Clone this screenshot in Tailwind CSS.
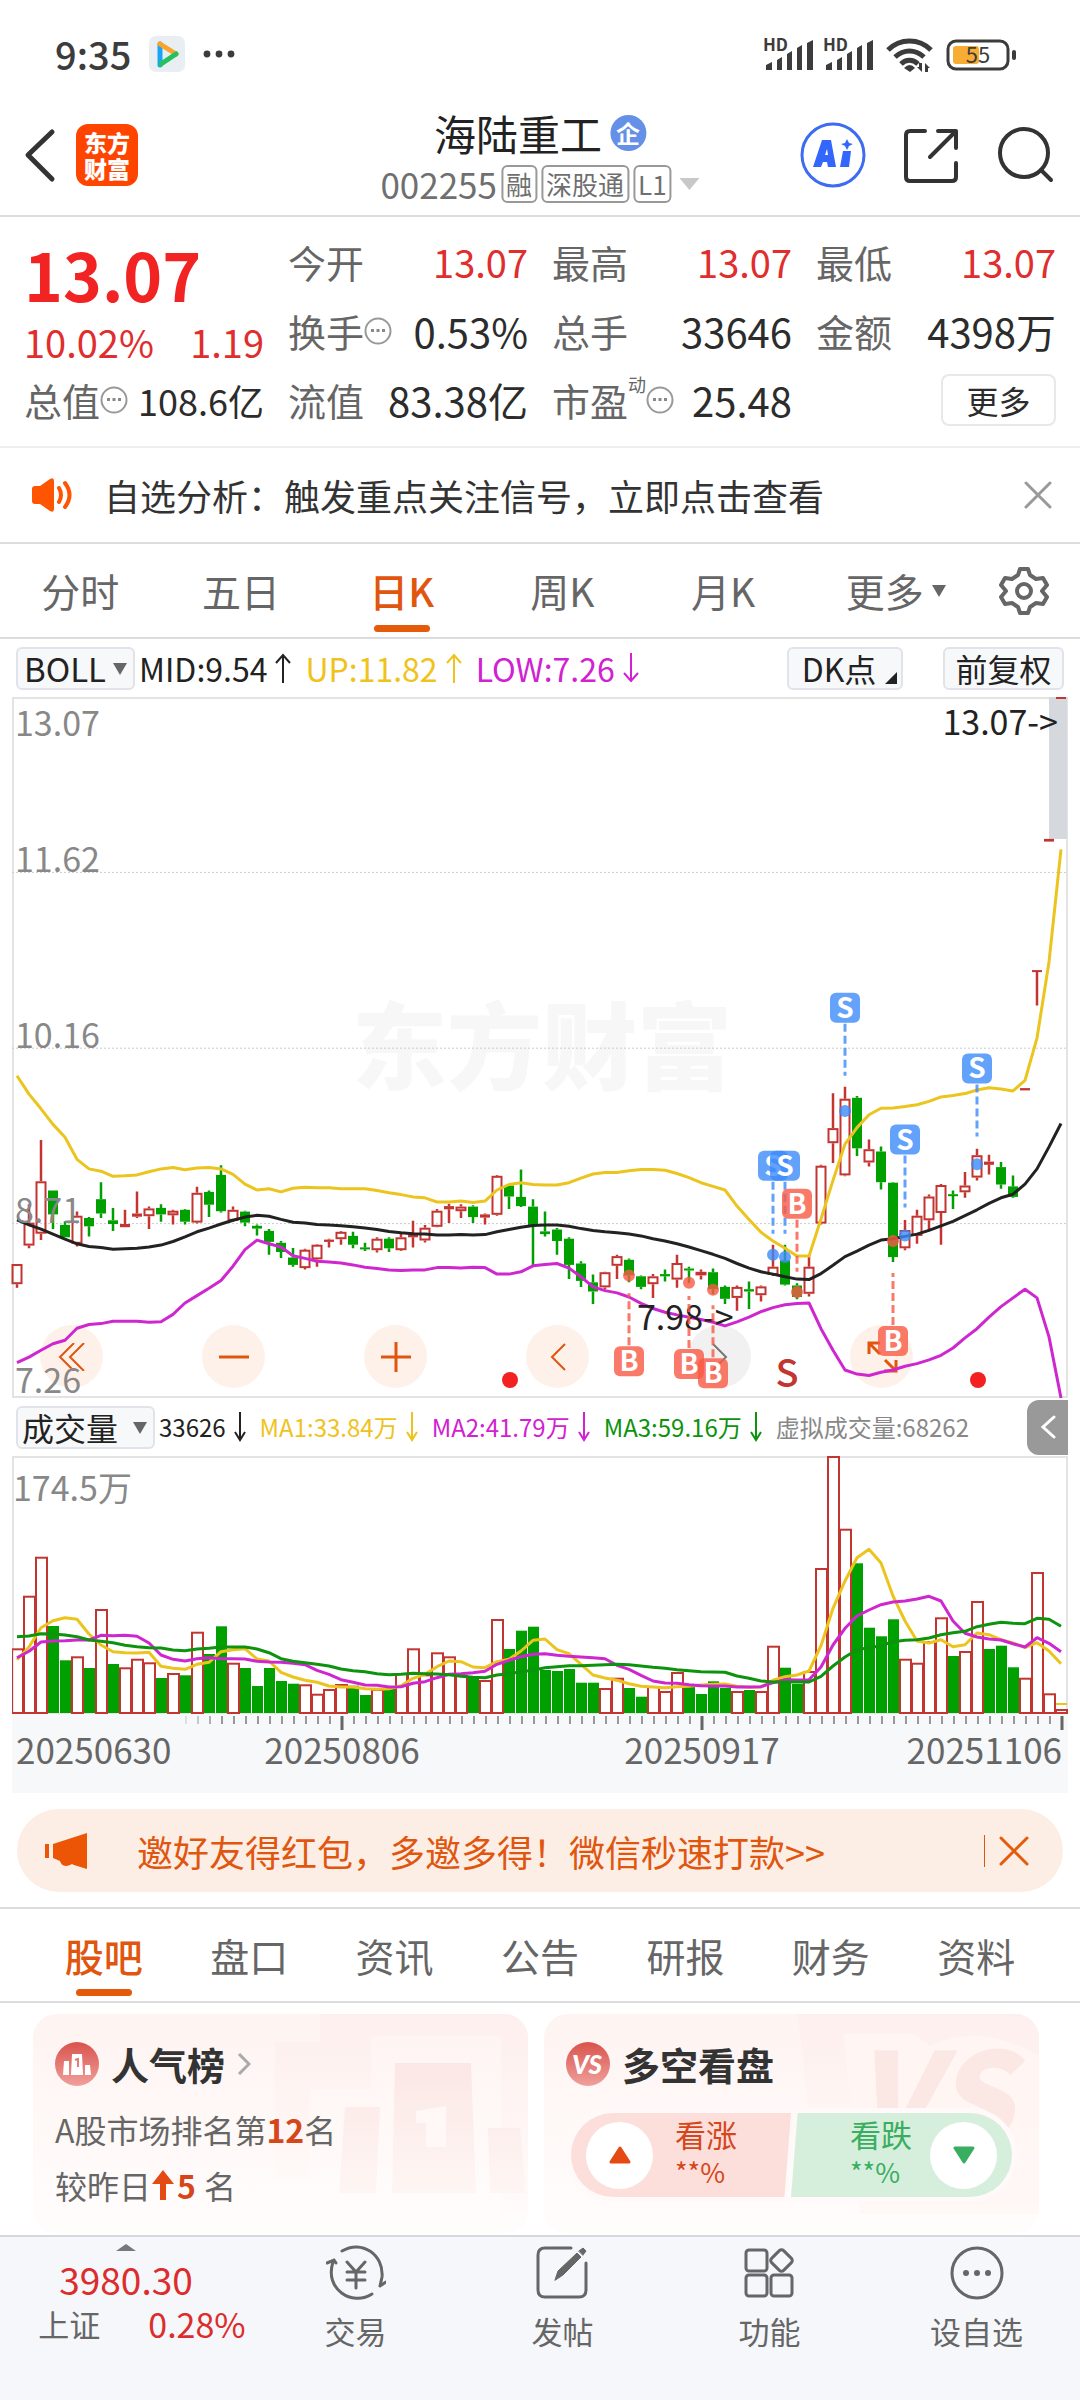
<!DOCTYPE html>
<html lang="zh-CN">
<head>
  <meta charset="UTF-8" />
  <meta name="viewport" content="width=device-width, initial-scale=1.0" />
  <title>海陆重工 002255 | 东方财富</title>
  <script src="https://cdn.jsdelivr.net/npm/@tailwindcss/browser@4"></script>

  <style>
    body {
      font-family: 'Noto Sans CJK SC', 'Noto Sans', sans-serif;
    }
  </style>
</head>
<body class="min-h-screen flex flex-col bg-white text-[#333] leading-none">

  <!-- Barra de estado -->
  <div class="h-[108px] pl-[55px] pr-[61px] flex items-center justify-between text-[#3c3c3c]">
    <div class="flex items-center gap-[18px]">
      <span class="text-[38px] font-medium">9:35</span>
      <svg class="w-9 h-9" viewBox="0 0 36 36">
        <rect width="36" height="36" rx="7" fill="#e9eef3" />
        <path d="M11 8v21" stroke="#18a5f5" stroke-width="5" stroke-linecap="round" />
        <path d="M11 8l16 10" stroke="#f7a52b" stroke-width="5" stroke-linecap="round" />
        <path d="M27 18L12 28" stroke="#25c15c" stroke-width="5" stroke-linecap="round" />
      </svg>
      <svg class="w-8 h-2" viewBox="0 0 32 8" fill="currentColor">
        <circle cx="4" cy="4" r="3.4" /><circle cx="16" cy="4" r="3.4" /><circle cx="28" cy="4" r="3.4" />
      </svg>
    </div>
    <svg class="w-[256px] h-9 overflow-visible" viewBox="0 0 256 36" fill="currentColor">
      <g id="signal">
        <text x="0" y="15" font-size="17" font-weight="700">HD</text>
        <path d="M3 34v-5l6-3v8zM14 34V24l5-3v13zM24 34V18l5-3v19zM34 34V12l5-3v25zM44 34V7l6-3v30z" />
      </g>
      <use href="#signal" x="60" />
      <g fill="none" stroke="currentColor" stroke-width="5">
        <path d="M125 14c12-12 31-12 43 0" /><path d="M132 21c9-8 20-8 29 0" /><path d="M138 28c5-5 12-5 17 0" />
      </g>
      <path d="M141 32q6-6 11 0l-5 4zM156 27h3v9l-5-5h2zM165 36h-3v-9l5 5h-2z" />
      <rect x="185" y="5" width="60" height="28" rx="8" fill="none" stroke="currentColor" stroke-width="3" />
      <rect x="190" y="10" width="26" height="18" rx="3" fill="#f7ad33" />
      <rect x="249" y="14" width="4" height="10" rx="2" />
      <text x="215" y="27" font-size="22" text-anchor="middle">55</text>
    </svg>
  </div>

  <!-- Cabecera -->
  <header class="relative h-[109px] border-b-2 border-[#dcdcdc] px-6 pb-[13px] flex justify-between">
    <div class="flex items-center gap-5">
      <button aria-label="返回">
        <svg class="w-8 h-14" viewBox="0 0 32 56" fill="none" stroke="#333" stroke-width="5" stroke-linecap="round" stroke-linejoin="round"><path d="M28 5L4 28l24 24" /></svg>
      </button>
      <a href="#" class="w-[62px] h-[62px] rounded-xl bg-[#ff4400] text-white text-[23px] leading-[26px] font-black text-center pt-[5px]">东方<br>财富</a>
    </div>
    <div class="absolute left-1/2 -translate-x-1/2 top-0 flex flex-col items-center">
      <h1 class="flex items-center gap-2 text-[42px] leading-[50px] text-[#222]">海陆重工
        <span class="w-9 h-9 rounded-full bg-[#6590e8] text-white text-[24px] leading-9 font-bold text-center">企</span>
      </h1>
      <div class="flex items-center gap-1 mt-[6px] text-[26px] text-[#6f6f6f]">
        <span class="text-[35px] leading-10">002255</span>
        <span class="border-2 border-[#999] rounded-md px-[3px] leading-[34px]">融</span>
        <span class="border-2 border-[#999] rounded-md px-[3px] leading-[34px]">深股通</span>
        <span class="border-2 border-[#999] rounded-md px-[3px] leading-[34px]">L1</span>
        <svg class="w-5 h-3 ml-1" viewBox="0 0 20 12"><path d="M0 0h20L10 12z" fill="#c8c8c8" /></svg>
      </div>
    </div>
    <div class="flex items-center gap-9 pr-[2px]">
      <button aria-label="Ai">
        <svg class="w-[66px] h-[66px]" viewBox="0 0 66 66">
          <circle cx="33" cy="33" r="31" fill="none" stroke="#3d6cf0" stroke-width="3" />
          <path d="M13 45l9-27h9l5 27h-8l-1-5h-4l-2 5zM25 33h3l-1-6zM43 29h8l-2 16h-9zM47 17l2 4 4 1-4 2-2 4-2-4-4-2 4-1z" fill="#3366fb" fill-rule="evenodd" />
        </svg>
      </button>
      <button aria-label="分享">
        <svg class="w-[58px] h-[58px]" viewBox="0 0 58 58" fill="none" stroke="#333" stroke-width="4" stroke-linecap="round" stroke-linejoin="round">
          <path d="M23 5H8q-4 0-4 4v42q0 4 4 4h42q4 0 4-4V37M36 5h18v17M54 5L28 31" />
        </svg>
      </button>
      <button aria-label="搜索">
        <svg class="w-[58px] h-[58px]" viewBox="0 0 58 58" fill="none" stroke="#333" stroke-width="4" stroke-linecap="round">
          <circle cx="28" cy="27" r="24" /><path d="M45 44l10 10" />
        </svg>
      </button>
    </div>
  </header>

  <!-- Cotización -->
  <section class="px-6 pt-[10px] pb-3 grid grid-cols-4 gap-6 border-b-2 border-[#eee] text-[38px] text-[#666] whitespace-nowrap">
    <div>
      <div class="h-[92px] flex items-center text-[66px] font-bold text-[#f22323]">13.07</div>
      <div class="h-[46px] flex items-center justify-between text-[#e02d2d]"><span>10.02%</span><span>1.19</span></div>
      <div class="h-[69px] flex items-center justify-between">
        <span class="flex items-center">总值
          <svg class="w-7 h-7" viewBox="0 0 28 28"><circle cx="14" cy="14" r="12.500" fill="none" stroke="#999" stroke-width="2" /><path d="M7 12h3v3H7zM12.500 12h3v3h-3zM18 12h3v3h-3z" fill="#888" /></svg>
        </span>
        <span class="text-[36px] text-[#2c2c2c]">108.6亿</span>
      </div>
    </div>
    <div>
      <div class="h-[69px] flex items-center justify-between">今开<span class="text-[#e02d2d]">13.07</span></div>
      <div class="h-[69px] flex items-center justify-between">
        <span class="flex items-center">换手
          <svg class="w-7 h-7" viewBox="0 0 28 28"><circle cx="14" cy="14" r="12.500" fill="none" stroke="#999" stroke-width="2" /><path d="M7 12h3v3H7zM12.500 12h3v3h-3zM18 12h3v3h-3z" fill="#888" /></svg>
        </span>
        <span class="text-[40px] text-[#2c2c2c]">0.53%</span>
      </div>
      <div class="h-[69px] flex items-center justify-between">流值<span class="text-[40px] text-[#2c2c2c]">83.38亿</span></div>
    </div>
    <div>
      <div class="h-[69px] flex items-center justify-between">最高<span class="text-[#e02d2d]">13.07</span></div>
      <div class="h-[69px] flex items-center justify-between">总手<span class="text-[40px] text-[#2c2c2c]">33646</span></div>
      <div class="h-[69px] flex items-center justify-between">
        <span class="flex items-center">市盈<sup class="text-[18px] -top-4">动</sup>
          <svg class="w-7 h-7" viewBox="0 0 28 28"><circle cx="14" cy="14" r="12.500" fill="none" stroke="#999" stroke-width="2" /><path d="M7 12h3v3H7zM12.500 12h3v3h-3zM18 12h3v3h-3z" fill="#888" /></svg>
        </span>
        <span class="text-[40px] text-[#2c2c2c]">25.48</span>
      </div>
    </div>
    <div>
      <div class="h-[69px] flex items-center justify-between">最低<span class="text-[#e02d2d]">13.07</span></div>
      <div class="h-[69px] flex items-center justify-between">金额<span class="text-[40px] text-[#2c2c2c]">4398万</span></div>
      <div class="h-[69px] flex items-center justify-end">
        <button class="w-[115px] h-[52px] border-2 border-[#e8e8e8] rounded-lg text-[32px] text-[#2c2c2c]">更多</button>
      </div>
    </div>
  </section>

  <!-- Aviso -->
  <div class="h-[96px] pl-[30px] pr-7 flex items-center border-b-2 border-[#dcdcdc]">
    <svg class="w-11 h-9 mr-[30px]" viewBox="0 0 44 36">
      <path d="M2 12q0-3 3-3h5L20 2q4-2 4 2v28q0 4-4 2l-10-7H5q-3 0-3-3z" fill="#ff5500" />
      <path d="M29 11q4 7 0 14M35 6q9 12 0 24" fill="none" stroke="#ff5500" stroke-width="4" stroke-linecap="round" />
    </svg>
    <a href="#" class="flex-1 text-[36px]">自选分析：触发重点关注信号，立即点击查看</a>
    <button aria-label="关闭">
      <svg class="w-7 h-7" viewBox="0 0 28 28" stroke="#999" stroke-width="3" stroke-linecap="round"><path d="M2 2l24 24M26 2L2 26" /></svg>
    </button>
  </div>

  <!-- Periodos -->
  <nav class="h-[95px] flex border-b-2 border-[#dcdcdc] text-[39px] text-[#666]">
    <button class="flex-1">分时</button>
    <button class="flex-1">五日</button>
    <button class="flex-1 relative font-medium text-[#e0560f]">日K
      <span class="absolute bottom-[5px] left-1/2 -translate-x-1/2 w-14 h-[7px] rounded-full bg-[#e65a0b]"></span>
    </button>
    <button class="flex-1">周K</button>
    <button class="flex-1">月K</button>
    <button class="flex-1 flex items-center justify-center gap-2 pl-3">更多
      <svg class="w-[14px] h-3" viewBox="0 0 14 12"><path d="M0 0h14L7 12z" fill="#666" /></svg>
    </button>
    <button class="w-[104px] pr-2 flex items-center justify-center" aria-label="设置">
      <svg class="w-[50px] h-[50px]" viewBox="0 0 50 50" fill="none" stroke="#666" stroke-width="4" stroke-linejoin="round">
        <path d="M21 3h8l2 6 6 4 7-1 4 7-5 6 5 6-4 7-7-1-6 4-2 6h-8l-2-6-6-4-7 1-4-7 5-6-5-6 4-7 7 1 6-4z" />
        <circle cx="25" cy="25" r="7" />
      </svg>
    </button>
  </nav>

  <!-- Indicador BOLL -->
  <div class="h-[58px] px-4 flex items-center text-[32px] text-[#222] whitespace-nowrap">
    <div class="relative">
      <select aria-label="主图指标" class="appearance-none w-[119px] h-[43px] pl-[6px] border-2 border-[#e0e3e9] rounded-md bg-[#f7f8fa] text-[33px] leading-[38px]">
        <option>BOLL</option>
        <option>MA</option>
      </select>
      <svg class="absolute right-2 top-4 w-[14px] h-3 pointer-events-none" viewBox="0 0 14 12"><path d="M0 0h14L7 12z" fill="#666" /></svg>
    </div>
    <div class="flex items-center gap-[14px] ml-1">
      <span class="flex items-center gap-2">MID:9.54
        <svg class="w-4 h-[30px]" viewBox="0 0 16 30" fill="none" stroke="currentColor" stroke-width="2"><path d="M8 30V2M1 10l7-8 7 8" /></svg>
      </span>
      <span class="flex items-center gap-2 text-[#efc31c]">UP:11.82
        <svg class="w-4 h-[30px]" viewBox="0 0 16 30" fill="none" stroke="currentColor" stroke-width="2"><path d="M8 30V2M1 10l7-8 7 8" /></svg>
      </span>
      <span class="flex items-center gap-2 text-[#d022d0]">LOW:7.26
        <svg class="w-4 h-[30px]" viewBox="0 0 16 30" fill="none" stroke="currentColor" stroke-width="2"><path d="M8 0v28M1 20l7 8 7-8" /></svg>
      </span>
    </div>
    <button class="relative ml-auto mr-10 w-[116px] h-[43px] pr-3 border-2 border-[#e0e3e9] rounded-md bg-[#f7f8fa]">DK点
      <svg class="absolute right-1 bottom-1 w-3 h-3" viewBox="0 0 12 12"><path d="M12 0v12H0z" fill="#222" /></svg>
    </button>
    <button class="w-[121px] h-[43px] border-2 border-[#e0e3e9] rounded-md bg-[#f7f8fa]">前复权</button>
  </div>

  <!-- Gráfico de velas -->
  <div class="relative mx-3">
    <div class="absolute left-7 bottom-[10px] flex gap-[99px] text-[#e0560f]">
      <button aria-label="最早" class="w-[63px] h-[63px] rounded-full bg-[#fef1ea] flex items-center justify-center">
        <svg class="w-7 h-7" viewBox="0 0 28 28" fill="none" stroke="currentColor" stroke-width="2"><path d="M16 0L2 14l14 14M26 0L12 14l14 14" /></svg>
      </button>
      <button aria-label="缩小" class="w-[63px] h-[63px] rounded-full bg-[#fef1ea] flex items-center justify-center">
        <svg class="w-[30px] h-[30px]" viewBox="0 0 30 30" stroke="currentColor" stroke-width="3"><path d="M0 15h30" /></svg>
      </button>
      <button aria-label="放大" class="w-[63px] h-[63px] rounded-full bg-[#fef1ea] flex items-center justify-center">
        <svg class="w-[30px] h-[30px]" viewBox="0 0 30 30" stroke="currentColor" stroke-width="3"><path d="M0 15h30M15 0v30" /></svg>
      </button>
      <button aria-label="左移" class="w-[63px] h-[63px] rounded-full bg-[#fef1ea] flex items-center justify-center">
        <svg class="w-4 h-7" viewBox="0 0 16 28" fill="none" stroke="currentColor" stroke-width="2"><path d="M15 1L2 14l13 13" /></svg>
      </button>
      <button aria-label="右移" class="w-[63px] h-[63px] rounded-full bg-[#f1f1f1] text-[#777] flex items-center justify-center">
        <svg class="w-4 h-7" viewBox="0 0 16 28" fill="none" stroke="currentColor" stroke-width="2"><path d="M1 1l13 13L1 27" /></svg>
      </button>
      <button aria-label="全屏" class="w-[63px] h-[63px] rounded-full bg-[#fef1ea] flex items-center justify-center">
        <svg class="w-8 h-8" viewBox="0 0 32 32" fill="none" stroke="currentColor" stroke-width="3"><path d="M3 13V2h11M3 2l11 11M18 30h12V19M30 30L19 19" /></svg>
      </button>
    </div>
    <svg id="kline" class="relative block w-full h-auto overflow-visible pointer-events-none" viewBox="0 0 1056 701"></svg>
  </div>

  <!-- Indicador de volumen -->
  <div class="h-[58px] pl-4 mr-3 flex items-center whitespace-nowrap text-[#222]">
    <div class="relative">
      <select aria-label="副图指标" class="appearance-none w-[139px] h-[43px] pl-1 border-2 border-[#e0e3e9] rounded-md bg-[#f7f8fa] text-[32px] leading-[38px]">
        <option>成交量</option>
        <option>MACD</option>
      </select>
      <svg class="absolute right-2 top-4 w-[14px] h-3 pointer-events-none" viewBox="0 0 14 12"><path d="M0 0h14L7 12z" fill="#666" /></svg>
    </div>
    <div class="flex items-center gap-[14px] ml-1 text-[24px]">
      <span class="flex items-center gap-2">33626
        <svg class="w-3 h-[30px]" viewBox="0 0 12 30" fill="none" stroke="currentColor" stroke-width="2"><path d="M6 0v28M1 20l5 8 5-8" /></svg>
      </span>
      <span class="flex items-center gap-2 text-[#efc31c]">MA1:33.84万
        <svg class="w-3 h-[30px]" viewBox="0 0 12 30" fill="none" stroke="currentColor" stroke-width="2"><path d="M6 0v28M1 20l5 8 5-8" /></svg>
      </span>
      <span class="flex items-center gap-2 text-[#d022d0]">MA2:41.79万
        <svg class="w-3 h-[30px]" viewBox="0 0 12 30" fill="none" stroke="currentColor" stroke-width="2"><path d="M6 0v28M1 20l5 8 5-8" /></svg>
      </span>
      <span class="flex items-center gap-2 text-[#0d930d]">MA3:59.16万
        <svg class="w-3 h-[30px]" viewBox="0 0 12 30" fill="none" stroke="currentColor" stroke-width="2"><path d="M6 0v28M1 20l5 8 5-8" /></svg>
      </span>
      <span class="text-[#888]">虚拟成交量:68262</span>
    </div>
    <button aria-label="展开" class="ml-auto w-[41px] h-[55px] rounded-l-xl bg-[#999] flex items-center justify-center">
      <svg class="w-4 h-6" viewBox="0 0 16 24" fill="none" stroke="#fff" stroke-width="3" stroke-linecap="round"><path d="M14 2L3 12l11 10" /></svg>
    </button>
  </div>

  <!-- Volumen y eje de fechas -->
  <div class="mx-3">
    <svg id="volume" class="block w-full h-auto" viewBox="0 0 1056 258"></svg>
    <svg id="axis" class="block w-full h-auto bg-[#f7f8fa]" viewBox="0 0 1056 79"></svg>
  </div>

  <!-- Promoción -->
  <div class="mx-[17px] mt-4 mb-[15px] h-[83px] rounded-full bg-[#fceee5] pl-7 pr-[34px] flex items-center text-[#e0560f]">
    <svg class="w-[42px] h-9 mr-[50px]" viewBox="0 0 42 36" fill="#eb5505"><path d="M0 11h4v14H0zM8 11L42 0v36l-13-4-2-1-2 1q-8 3-10-4l-7-3z" /></svg>
    <a href="#" class="flex-1 text-[36px]">邀好友得红包，多邀多得！微信秒速打款&gt;&gt;</a>
    <span class="w-px h-8 bg-[#e0560f] mr-[14px]"></span>
    <button aria-label="关闭">
      <svg class="w-[30px] h-[30px]" viewBox="0 0 30 30" stroke="#e65a0b" stroke-width="3" stroke-linecap="round"><path d="M2 2l26 26M28 2L2 28" /></svg>
    </button>
  </div>

  <!-- Pestañas -->
  <nav class="h-[96px] px-[31px] flex border-y-2 border-[#dcdcdc] text-[39px] text-[#666]">
    <button class="flex-1 relative font-medium text-[#e0560f]">股吧
      <span class="absolute bottom-[5px] left-1/2 -translate-x-1/2 w-14 h-[7px] rounded-full bg-[#e65a0b]"></span>
    </button>
    <button class="flex-1">盘口</button>
    <button class="flex-1">资讯</button>
    <button class="flex-1">公告</button>
    <button class="flex-1">研报</button>
    <button class="flex-1">财务</button>
    <button class="flex-1">资料</button>
  </nav>

  <!-- Tarjetas -->
  <section class="pl-[33px] pr-[41px] pt-[11px] pb-[1px] grid grid-cols-2 gap-4">
    <div class="relative h-[220px] rounded-3xl overflow-hidden bg-linear-to-b from-[#fef4f2] to-[#fffdfc] px-[22px] pt-7">
      <svg class="absolute right-0 top-0 w-[255px] h-[220px]" viewBox="0 0 255 220">
        <defs>
          <linearGradient id="fade" x1="0" y1="0" x2="0" y2="1"><stop offset="0" stop-color="#fbe7e5" /><stop offset="1" stop-color="#fef6f4" /></linearGradient>
          <linearGradient id="halo" x1="0" y1="0" x2="0" y2="1"><stop offset="0" stop-color="#fdefed" /><stop offset="1" stop-color="#fffbfa" /></linearGradient>
        </defs>
        <path d="M47 0H255v200H228V22H98v53H37v90H2V28h45z" fill="url(#halo)" />
        <path d="M72 93h35l-4 86H66zM122 49h76l5 130h-84zM215 114h32l6 65h-36z" fill="url(#fade)" />
        <path d="M143 97l30-5v41h-20v-24h-10z" fill="#fff8f6" />
      </svg>
      <div class="relative">
        <a href="#" class="flex items-center text-[38px] leading-[44px] font-bold">
          <svg class="w-11 h-11 mr-3" viewBox="0 0 44 44">
            <defs><linearGradient id="red" x1="0" y1="0" x2="0" y2="1"><stop offset="0" stop-color="#d9534d" /><stop offset="1" stop-color="#f0a09c" /></linearGradient></defs>
            <circle cx="22" cy="22" r="22" fill="url(#red)" />
            <path d="M9 19h5v14H8zM17 12h10l1 21H16zM30 23h5l1 10h-6z" fill="#fff" />
            <path d="M20 18l3-1v8" fill="none" stroke="#e27c77" stroke-width="2" />
          </svg>人气榜
          <svg class="w-[14px] h-[22px] ml-3" viewBox="0 0 14 22" fill="none" stroke="#aaa" stroke-width="3"><path d="M2 1l10 10L2 21" /></svg>
        </a>
        <p class="mt-5 text-[32px] leading-[46px] text-[#666]">A股市场排名第<b class="text-[#d5471a]">12</b>名</p>
        <p class="mt-[10px] text-[32px] leading-[46px] text-[#666] flex items-center">较昨日
          <svg class="w-[22px] h-[30px] ml-px mr-[3px]" viewBox="0 0 22 30" fill="#e64a14"><path d="M11 0l11 14h-8v16H8V14H0z" /></svg><b class="text-[#d5471a] mr-2">5</b>名</p>
      </div>
    </div>

    <div class="relative h-[220px] rounded-3xl overflow-hidden bg-linear-to-b from-[#fef4f2] to-[#fffdfc] px-[22px] pt-7">
      <svg class="absolute right-0 top-0 w-[241px] h-[220px]" viewBox="0 0 241 220">
        <path d="M0 0h241v190H20z" fill="url(#halo)" />
        <path d="M46 20h70l16 12q50-24 109 10v158H62z" fill="#fff6f4" opacity=".8" />
        <text x="54" y="130" font-size="126" font-weight="900" font-style="italic" fill="#fbe8e5">VS</text>
      </svg>
      <div class="relative">
        <h2 class="flex items-center text-[38px] leading-[44px] font-bold">
          <svg class="w-11 h-11 mr-3" viewBox="0 0 44 44">
            <circle cx="22" cy="22" r="22" fill="url(#red)" />
            <text x="21" y="32" font-size="26" font-weight="900" font-style="italic" text-anchor="middle" fill="#fff" font-family="Lato">VS</text>
          </svg>多空看盘
        </h2>
        <div class="mt-[22px] w-[451px] rounded-full border-[5px] border-[#fffaf9] flex">
          <button class="w-[220px] h-[84px] rounded-l-full bg-[#fcdedb] [clip-path:polygon(0_0,100%_0,97%_100%,0_100%)] flex items-center pl-[15px] text-[#d5471a] text-left">
            <span class="w-[67px] h-[67px] rounded-full bg-white flex items-center justify-center mr-[22px]">
              <svg class="w-[22px] h-[18px]" viewBox="0 0 22 18"><path d="M11 2L2 16h18z" fill="#e64a14" stroke="#e64a14" stroke-width="3" stroke-linejoin="round" /></svg>
            </span>
            <span class="text-[31px] leading-10 pb-[6px]">看涨<br><span class="block text-[27px] leading-9">**%</span></span>
          </button>
          <button class="flex-1 h-[84px] rounded-r-full bg-[#d6efdd] [clip-path:polygon(3%_0,100%_0,100%_100%,0_100%)] flex items-center justify-end pr-[15px] text-[#3aae60] text-left">
            <span class="text-[31px] leading-10 pb-[6px]">看跌<br><span class="block text-[27px] leading-9">**%</span></span>
            <span class="w-[67px] h-[67px] rounded-full bg-white flex items-center justify-center ml-[18px]">
              <svg class="w-[22px] h-[18px]" viewBox="0 0 22 18"><path d="M11 16L2 2h18z" fill="#3aae60" stroke="#3aae60" stroke-width="3" stroke-linejoin="round" /></svg>
            </span>
          </button>
        </div>
      </div>
    </div>
  </section>

  <!-- Barra inferior -->
  <nav class="flex-1 flex bg-[#f6f7fa] border-t-2 border-[#d6d8dc] text-[31px] text-[#666]">
    <a href="#" class="w-[252px] pt-[7px] flex flex-col items-center">
      <svg class="w-5 h-[7px]" viewBox="0 0 20 7"><path d="M0 7L10 0l10 7z" fill="#77777f" /></svg>
      <span class="mt-[6px] text-[37px] leading-[44px] text-[#dc2d2d]">3980.30</span>
      <span class="flex items-center gap-12 pl-8 leading-[46px]">上证<span class="text-[34px] text-[#dc2d2d]">0.28%</span></span>
    </a>
    <a href="#" class="flex-1 pt-2 flex flex-col items-center">
      <svg class="w-[60px] h-14" viewBox="0 0 60 56" fill="none" stroke="#666" stroke-width="3" stroke-linecap="round">
        <path d="M16 6C36-6 58 10 56 32l-2 9M60 37l-6 4M46 49C26 62-2 44 7 17M1 18l7-3 2 3" />
        <path d="M21 17l9 10 9-10M30 27v16M21 27h18M21 35h18" />
      </svg>
      <span class="mt-[10px] leading-10">交易</span>
    </a>
    <a href="#" class="flex-1 pt-2 flex flex-col items-center">
      <svg class="w-14 h-14" viewBox="0 0 56 56" fill="none" stroke="#666" stroke-width="3" stroke-linecap="round">
        <path d="M36 3H10q-7 0-7 7v35q0 7 7 7h34q7 0 7-7V18" />
        <path d="M20 35l3-9L42 8l4 4-18 18zM44 6l4-3 3 3-3 4z" fill="#666" stroke-width="1" />
      </svg>
      <span class="mt-[10px] leading-10">发帖</span>
    </a>
    <a href="#" class="flex-1 pt-2 flex flex-col items-center">
      <svg class="w-14 h-14" viewBox="0 0 56 56" fill="none" stroke="#666" stroke-width="3">
        <rect x="4" y="5" width="21" height="21" rx="3" /><rect x="4" y="30" width="21" height="21" rx="3" /><rect x="29" y="30" width="21" height="21" rx="3" />
        <rect x="31" y="7" width="17" height="17" rx="3" transform="rotate(45 39.500 15.500)" />
      </svg>
      <span class="mt-[10px] leading-10">功能</span>
    </a>
    <a href="#" class="flex-1 pt-2 flex flex-col items-center">
      <svg class="w-14 h-14" viewBox="0 0 56 56">
        <circle cx="28" cy="28" r="25" fill="none" stroke="#666" stroke-width="3" />
        <g fill="#666"><circle cx="17" cy="28" r="3" /><circle cx="28" cy="28" r="3" /><circle cx="39" cy="28" r="3" /></g>
      </svg>
      <span class="mt-[10px] leading-10">设自选</span>
    </a>
  </nav>

  <script>
    const RED = '#c23531', GREEN = '#00a000', YELLOW = '#ecc41e', PURPLE = '#cf27cf', BLACK = '#222';
    const x = i => 5 + i * 12;

    // Niveles del gráfico: 13 = borde superior, 1540 = borde inferior
    const y = v => Math.round((v - 13) * 7010 / 1527) / 10;

    // [color, máximo, techo del cuerpo, base del cuerpo, mínimo]
    const candles = [
      ['r',1248,1248,1292,1300],['r',1118,1158,1208,1214],['r',978,1068,1182,1196],['g',1088,1088,1140,1172],
      ['g',1155,1163,1190,1190],['r',1134,1143,1204,1210],['g',1146,1148,1166,1188],['g',1070,1107,1138,1148],
      ['g',1126,1153,1161,1176],['r',1130,1161,1168,1168],['r',1090,1138,1145,1148],['r',1123,1127,1144,1172],
      ['g',1118,1126,1140,1156],['r',1130,1132,1142,1162],['g',1128,1130,1156,1162],['r',1080,1093,1158,1160],
      ['g',1088,1091,1119,1146],['g',1033,1054,1133,1136],['r',1123,1130,1154,1156],['g',1132,1134,1158,1166],
      ['g',1162,1165,1171,1186],['g',1172,1176,1200,1228],['g',1198,1202,1222,1235],['g',1213,1234,1250,1254],
      ['r',1215,1217,1257,1260],['r',1205,1206,1238,1254],['r',1193,1195,1200,1212],['r',1176,1178,1194,1206],
      ['g',1178,1187,1206,1214],['g',1202,1212,1216,1220],['r',1190,1193,1218,1223],['g',1190,1193,1214,1222],
      ['r',1182,1190,1218,1220],['r',1154,1184,1190,1212],['r',1163,1169,1197,1201],['r',1128,1132,1167,1168],
      ['r',1117,1122,1129,1159],['r',1118,1123,1133,1148],['g',1120,1123,1146,1159],['r',1138,1140,1147,1162],
      ['r',1054,1056,1141,1143],['g',1075,1077,1101,1128],['g',1042,1102,1122,1124],['g',1107,1123,1165,1250],
      ['g',1134,1177,1183,1188],['g',1170,1173,1198,1228],['g',1190,1193,1250,1281],['g',1242,1247,1285,1298],
      ['g',1271,1288,1308,1335],['r',1265,1266,1299,1303],['r',1228,1231,1252,1281],['g',1236,1239,1273,1288],
      ['g',1273,1275,1298,1303],['r',1270,1275,1292,1322],['g',1260,1270,1275,1286],['r',1228,1246,1282,1300],
      ['g',1254,1258,1262,1290],['r',1260,1265,1273,1282],['g',1258,1266,1303,1314],['g',1295,1298,1324,1335],
      ['r',1295,1298,1322,1350],['g',1286,1303,1308,1346],['r',1295,1297,1316,1330],['r',1206,1254,1272,1274],
      ['g',1206,1240,1293,1295],['g',1290,1295,1320,1325],['r',1228,1254,1313,1319],['r',1032,1034,1160,1162],
      ['r',876,952,985,1028],['r',862,888,1055,1057],['g',882,886,996,1013],['r',977,998,1027,1036],
      ['g',992,1003,1070,1086],['g',1070,1071,1233,1244],['r',1152,1174,1214,1218],['r',1130,1143,1187,1204],
      ['r',1097,1101,1153,1175],['r',1074,1076,1137,1206],['g',1088,1096,1100,1128],['r',1048,1077,1092,1104],
      ['r',997,1011,1060,1066],['r',1010,1025,1032,1053],['g',1026,1037,1075,1084],['g',1055,1079,1102,1104],
      ['r',865,865,870,870],['r',608,608,612,685],['r',322,322,328,328],['r',13,13,17,17]
    ];

    const up = [838,878,910,944,972,1020,1041,1046,1057,1056,1054,1047,1041,1038,1043,1039,1038,1041,1053,1074,1087,1084,1091,1083,1081,1082,1082,1084,1084,1084,1088,1093,1097,1102,1104,1113,1113,1111,1114,1111,1087,1075,1071,1075,1076,1076,1071,1061,1052,1049,1049,1045,1042,1042,1044,1051,1060,1071,1079,1087,1122,1151,1179,1198,1214,1231,1231,1150,1066,987,951,923,909,908,905,901,894,884,881,877,869,864,867,871,848,756,590,345];
    const mid = [1152,1163,1172,1183,1194,1204,1210,1212,1216,1215,1214,1211,1207,1199,1189,1178,1170,1161,1153,1146,1142,1144,1151,1157,1159,1162,1163,1165,1167,1170,1173,1177,1180,1182,1183,1185,1185,1184,1185,1184,1178,1173,1168,1164,1163,1163,1166,1171,1175,1178,1180,1183,1187,1193,1198,1204,1211,1219,1227,1236,1247,1257,1265,1270,1276,1281,1282,1269,1251,1232,1220,1207,1196,1193,1188,1183,1175,1165,1155,1143,1130,1116,1104,1096,1074,1041,993,942];
    const low = [1463,1451,1436,1422,1414,1388,1380,1378,1373,1373,1373,1375,1374,1358,1333,1317,1301,1284,1253,1217,1196,1204,1211,1230,1236,1242,1244,1246,1250,1255,1258,1261,1262,1261,1261,1256,1256,1257,1255,1256,1270,1270,1265,1252,1249,1247,1257,1276,1298,1306,1311,1320,1334,1345,1353,1359,1364,1369,1375,1383,1374,1364,1352,1343,1337,1334,1333,1389,1436,1479,1488,1491,1484,1479,1471,1465,1457,1447,1431,1409,1389,1364,1341,1322,1303,1322,1407,1540];

    // Señales de compra y venta: [tipo, vela, nivel de la etiqueta, nivel del punto]
    const signals = [
      ['S',63,1034,1228],['S',64,1034,1233],['S',69,690,915],['S',74,977,1186],['S',80,822,1031],
      ['B',51,1460,1273],['B',56,1466,1289],['B',58,1486,1304],['B',65,1117,1309],['B',73,1416,1198]
    ];

    const line = (data, fn, color) =>
      `<polyline points="${data.map((v, i) => x(i) + ',' + fn(v)).join(' ')}" fill="none" stroke="${color}" stroke-width="3" stroke-linejoin="round" />`;

    function drawCandles() {
      let s = '<text x="340" y="386" font-size="95" font-weight="900" fill="#f7f7f7">东方财富</text>';
      s += '<rect x="1" y="1" width="1054" height="699" fill="none" stroke="#e3e3e3" stroke-width="2" />';
      [395, 778, 1160].forEach(v => {
        s += `<path d="M0 ${y(v)}H1056" stroke="#ccc" stroke-dasharray="2 2" />`;
      });
      s += `<rect x="1037" y="0" width="18" height="142" fill="#d5d8dd" />`;

      candles.forEach(([c, hi, top, bot, lo], i) => {
        const color = c === 'r' ? RED : GREEN;
        const h = y(bot) - y(top);
        s += `<path d="M${x(i)} ${y(hi)}V${y(top)}M${x(i)} ${y(bot)}V${y(lo)}" stroke="${color}" stroke-width="2.5" />`;
        if (c === 'r' && h > 3.5) {
          s += `<rect x="${x(i) - 4.5}" y="${y(top) + 1}" width="9" height="${h - 2}" fill="none" stroke="${color}" stroke-width="2" />`;
        } else {
          s += `<rect x="${x(i) - 5}" y="${y(top)}" width="10" height="${Math.max(h, 2)}" fill="${color}" />`;
        }
      });

      s += line(up, y, YELLOW) + line(mid, y, BLACK) + line(low, y, PURPLE);

      [[39, '13.07'], [175, '11.62'], [351, '10.16'], [526, '8.71'], [696, '7.26']].forEach(([ty, t]) => {
        s += `<text x="3" y="${ty}" font-size="34" fill="#888">${t}</text>`;
      });
      s += `<text x="1046" y="38" font-size="34" fill="#222" text-anchor="end">13.07-&gt;</text>`;
      s += `<text x="625" y="633" font-size="34" fill="#222">7.98-&gt;</text>`;

      signals.forEach(([t, i, tag, dot]) => {
        const color = t === 'S' ? '#3d8bfb' : '#fa5a46';
        const dir = dot > tag ? 1 : -1;
        s += `<g opacity=".8"><path d="M${x(i)} ${y(tag) + dir * 16}V${y(tag) + dir * 68}" stroke="${color}" stroke-width="3" stroke-dasharray="8 4" />`;
        s += `<circle cx="${x(i)}" cy="${y(dot)}" r="6" fill="${color}" />`;
        s += `<rect x="${x(i) - 15}" y="${y(tag) - 15}" width="30" height="30" rx="6" fill="${color}" /></g>`;
        s += `<text x="${x(i)}" y="${y(tag) + 10}" font-size="28" font-weight="700" text-anchor="middle" fill="#fff">${t}</text>`;
      });

      s += `<text x="775" y="690" font-size="38" font-weight="500" text-anchor="middle" fill="${RED}">S</text>`;
      s += '<circle cx="498" cy="683" r="8" fill="#f32222" /><circle cx="966" cy="683" r="8" fill="#f32222" />';
      document.getElementById('kline').innerHTML = s;
    }

    // Volumen: 195 = borde superior, 967 = base
    const vy = v => Math.round((v - 195) * 10 / 3) / 10;
    const volColors = 'rrrggrgrgrrrgrgrggrggggg' + 'rrrrggrgrrrrrrgrrggg' + 'gggggrrggrrrgggg' + 'rgrrggrrrrgggg' + 'rrrrgrrgggrrrr';
    const volumes = [772,614,497,705,808,796,831,654,819,829,803,814,861,846,853,722,789,706,815,831,885,831,870,878,880,908,894,879,884,912,894,893,846,772,850,784,796,852,856,867,684,774,719,707,837,840,834,875,875,891,860,891,917,885,900,843,888,909,871,891,900,897,900,764,830,879,840,531,195,413,517,710,736,685,803,815,750,679,795,780,630,774,764,829,860,543,907,954];
    const ma1 = [806,768,710,689,680,685,729,762,782,785,786,784,826,832,835,820,814,782,776,773,804,810,844,858,868,874,885,888,888,893,895,893,884,862,850,827,810,812,828,830,812,805,780,748,744,776,788,820,852,861,868,878,886,888,890,887,886,882,880,879,886,889,888,868,857,852,840,764,652,570,500,475,516,615,690,750,756,746,767,761,726,731,746,756,770,755,780,818];
    const ma2 = [800,781,753,750,749,747,747,733,734,733,736,756,792,805,810,803,800,803,803,804,811,813,814,817,821,838,850,866,874,882,883,888,887,877,872,860,850,848,845,841,820,808,797,790,788,793,796,798,800,803,823,835,853,870,876,877,881,884,885,885,888,888,887,875,866,867,866,828,762,712,675,657,641,633,630,624,616,630,690,727,738,744,747,758,768,740,757,782];
    const ma3 = [737,735,728,729,732,737,747,751,755,763,767,770,771,777,779,774,772,768,768,768,774,785,803,811,815,820,825,834,839,842,848,851,850,847,848,849,851,856,859,860,852,848,842,838,830,827,824,824,823,821,820,821,825,829,832,836,839,842,843,844,855,862,870,873,873,873,873,856,825,798,776,770,764,752,748,746,741,731,725,721,707,700,694,697,698,682,685,706];

    function drawVolume() {
      let s = '<rect x="1" y="1" width="1054" height="256" fill="none" stroke="#e3e3e3" stroke-width="2" />';
      volumes.forEach((v, i) => {
        if (volColors[i] === 'r') {
          s += `<rect x="${x(i) - 5}" y="${vy(v) + 1}" width="11" height="${256 - vy(v)}" fill="none" stroke="${RED}" stroke-width="2" />`;
        } else {
          s += `<rect x="${x(i) - 5}" y="${vy(v)}" width="11" height="${257 - vy(v)}" fill="${GREEN}" />`;
        }
      });
      s += line(ma1, vy, YELLOW) + line(ma2, vy, PURPLE) + line(ma3, vy, '#0d930d');
      s += `<path d="M1044 248h11" stroke="${YELLOW}" stroke-width="2" />`;
      s += '<text x="1" y="45" font-size="34" fill="#888">174.5万</text>';
      document.getElementById('volume').innerHTML = s;
    }

    function drawAxis() {
      let s = '';
      for (let i = 14; i < 88; i++) {
        const major = i === 27 || i === 57 || i === 87;
        s += `<path d="M${x(i) + 1} 2v${major ? 14 : 8}" stroke="${major ? '#666' : '#999'}" stroke-width="${major ? 3 : 2}" opacity="${Math.min(1, (i - 13) / 4)}" />`;
      }
      s += '<g font-size="35" fill="#666"><text x="4" y="50">20250630</text><text x="330" y="50" text-anchor="middle">20250806</text>';
      s += '<text x="690" y="50" text-anchor="middle">20250917</text><text x="1050" y="50" text-anchor="end">20251106</text></g>';
      document.getElementById('axis').innerHTML = s;
    }

    drawCandles();
    drawVolume();
    drawAxis();
  </script>
</body>
</html>
